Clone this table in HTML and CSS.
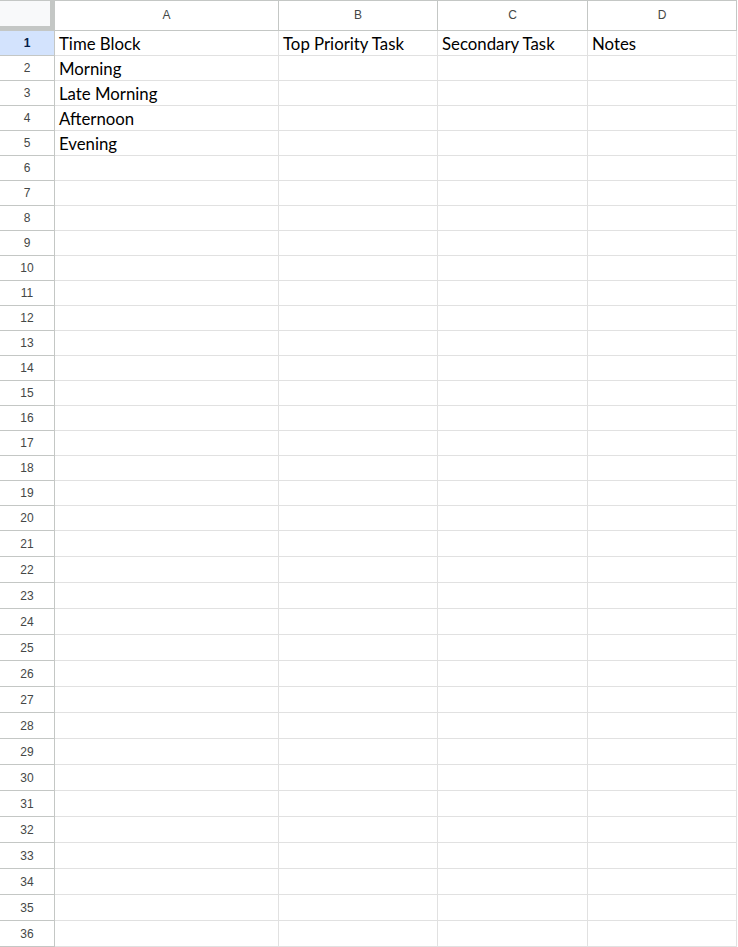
FILE: index.html
```html
<!DOCTYPE html>
<html>
<head>
<meta charset="utf-8">
<link rel="stylesheet" href="styles.css">
</head>
<body>
<div class="sheet">
  <div class="corner"></div><div class="ch">A</div><div class="ch">B</div><div class="ch">C</div><div class="ch">D</div>
  <div class="rn sel">1</div><div class="c">Time Block</div><div class="c">Top Priority Task</div><div class="c">Secondary Task</div><div class="c">Notes</div>
  <div class="rn">2</div><div class="c">Morning</div><div class="c"></div><div class="c"></div><div class="c"></div>
  <div class="rn">3</div><div class="c">Late Morning</div><div class="c"></div><div class="c"></div><div class="c"></div>
  <div class="rn">4</div><div class="c">Afternoon</div><div class="c"></div><div class="c"></div><div class="c"></div>
  <div class="rn">5</div><div class="c">Evening</div><div class="c"></div><div class="c"></div><div class="c"></div>
  <div class="rn">6</div><div class="c"></div><div class="c"></div><div class="c"></div><div class="c"></div>
  <div class="rn">7</div><div class="c"></div><div class="c"></div><div class="c"></div><div class="c"></div>
  <div class="rn">8</div><div class="c"></div><div class="c"></div><div class="c"></div><div class="c"></div>
  <div class="rn">9</div><div class="c"></div><div class="c"></div><div class="c"></div><div class="c"></div>
  <div class="rn">10</div><div class="c"></div><div class="c"></div><div class="c"></div><div class="c"></div>
  <div class="rn">11</div><div class="c"></div><div class="c"></div><div class="c"></div><div class="c"></div>
  <div class="rn">12</div><div class="c"></div><div class="c"></div><div class="c"></div><div class="c"></div>
  <div class="rn">13</div><div class="c"></div><div class="c"></div><div class="c"></div><div class="c"></div>
  <div class="rn">14</div><div class="c"></div><div class="c"></div><div class="c"></div><div class="c"></div>
  <div class="rn">15</div><div class="c"></div><div class="c"></div><div class="c"></div><div class="c"></div>
  <div class="rn">16</div><div class="c"></div><div class="c"></div><div class="c"></div><div class="c"></div>
  <div class="rn">17</div><div class="c"></div><div class="c"></div><div class="c"></div><div class="c"></div>
  <div class="rn">18</div><div class="c"></div><div class="c"></div><div class="c"></div><div class="c"></div>
  <div class="rn">19</div><div class="c"></div><div class="c"></div><div class="c"></div><div class="c"></div>
  <div class="rn">20</div><div class="c"></div><div class="c"></div><div class="c"></div><div class="c"></div>
  <div class="rn">21</div><div class="c"></div><div class="c"></div><div class="c"></div><div class="c"></div>
  <div class="rn">22</div><div class="c"></div><div class="c"></div><div class="c"></div><div class="c"></div>
  <div class="rn">23</div><div class="c"></div><div class="c"></div><div class="c"></div><div class="c"></div>
  <div class="rn">24</div><div class="c"></div><div class="c"></div><div class="c"></div><div class="c"></div>
  <div class="rn">25</div><div class="c"></div><div class="c"></div><div class="c"></div><div class="c"></div>
  <div class="rn">26</div><div class="c"></div><div class="c"></div><div class="c"></div><div class="c"></div>
  <div class="rn">27</div><div class="c"></div><div class="c"></div><div class="c"></div><div class="c"></div>
  <div class="rn">28</div><div class="c"></div><div class="c"></div><div class="c"></div><div class="c"></div>
  <div class="rn">29</div><div class="c"></div><div class="c"></div><div class="c"></div><div class="c"></div>
  <div class="rn">30</div><div class="c"></div><div class="c"></div><div class="c"></div><div class="c"></div>
  <div class="rn">31</div><div class="c"></div><div class="c"></div><div class="c"></div><div class="c"></div>
  <div class="rn">32</div><div class="c"></div><div class="c"></div><div class="c"></div><div class="c"></div>
  <div class="rn">33</div><div class="c"></div><div class="c"></div><div class="c"></div><div class="c"></div>
  <div class="rn">34</div><div class="c"></div><div class="c"></div><div class="c"></div><div class="c"></div>
  <div class="rn">35</div><div class="c"></div><div class="c"></div><div class="c"></div><div class="c"></div>
  <div class="rn">36</div><div class="c"></div><div class="c"></div><div class="c"></div><div class="c"></div>
</div>
</body>
</html>
```

FILE: styles.css
```css
html, body {
  margin: 0;
  padding: 0;
  background: #ffffff;
}

.sheet {
  display: grid;
  grid-template-columns: 55px 224px 159px 150px 149px;
  grid-template-rows: 30px repeat(20, 25px) repeat(16, 26px);
  border-top: 1px solid #c4c7c5;
  width: 737px;
}

.sheet > div {
  box-sizing: border-box;
}

.corner {
  background: #f8f9fa;
  border-right: 5px solid #c4c7c5;
  border-bottom: 5px solid #c4c7c5;
}

.ch {
  display: flex;
  align-items: center;
  justify-content: center;
  border-right: 1px solid #c4c7c5;
  border-bottom: 1px solid #c4c7c5;
  font-family: "Liberation Sans", Arial, sans-serif;
  font-size: 12px;
  color: #444746;
  padding-bottom: 1px;
}

.rn {
  display: flex;
  align-items: center;
  justify-content: center;
  border-right: 1px solid #c4c7c5;
  border-bottom: 1px solid #c4c7c5;
  font-family: "Liberation Sans", Arial, sans-serif;
  font-size: 12px;
  color: #444746;
}

.rn.sel {
  background: #d3e3fd;
  font-weight: bold;
  color: #041e49;
}

.c {
  display: flex;
  align-items: flex-end;
  border-right: 1px solid #e1e1e1;
  border-bottom: 1px solid #e1e1e1;
  padding: 0 4px 1px 4px;
  font-family: Lato, "Open Sans", sans-serif;
  font-size: 16.8px;
  color: #000000;
  white-space: nowrap;
  overflow: hidden;
}
```
